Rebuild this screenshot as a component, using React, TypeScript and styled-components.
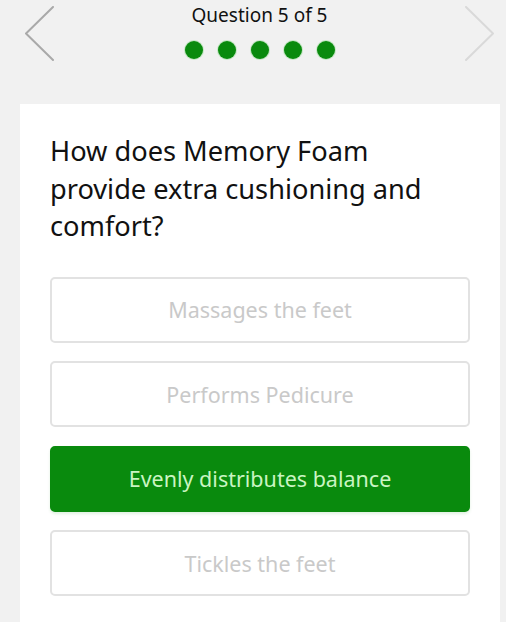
import React from "react";
import styled, { createGlobalStyle } from "styled-components";

const Global = createGlobalStyle`
  html, body { margin: 0; padding: 0; background: #f1f1f1; }
  body { font-family: "Noto Sans", "Open Sans", sans-serif; -webkit-font-smoothing: antialiased; }
`;

const Page = styled.div`
  width: 506px;
  height: 622px;
  overflow: hidden;
  background: #f1f1f1;
  display: flex;
  flex-direction: column;
`;

const Header = styled.header`
  height: 104px;
  display: grid;
  grid-template-columns: 80px 1fr 80px;
  align-items: start;
`;

const NavButton = styled.button<{ $side: "left" | "right" }>`
  border: 0;
  background: transparent;
  padding: 0;
  margin: 6px 0 0 0;
  height: 56px;
  display: flex;
  justify-content: ${(p) => (p.$side === "left" ? "flex-start" : "flex-end")};
  padding-left: ${(p) => (p.$side === "left" ? "25px" : "0")};
  padding-right: ${(p) => (p.$side === "right" ? "12px" : "0")};
`;

const Center = styled.div`
  display: flex;
  flex-direction: column;
  align-items: center;
  padding-top: 2px;
  padding-left: 13px;
`;

const Title = styled.div`
  font-size: 19px;
  line-height: 26px;
  color: #111;
`;

const Dots = styled.div`
  display: flex;
  gap: 15px;
  margin-top: 13px;
`;

const Dot = styled.span<{ $done: boolean }>`
  width: 18px;
  height: 18px;
  border-radius: 50%;
  background: ${(p) => (p.$done ? "#098a0d" : "#cfcfcf")};
  box-shadow: 0 0 0 1px rgba(60, 200, 60, 0.25);
`;

const Card = styled.main`
  flex: 1;
  margin: 0 6px 0 20px;
  background: #fff;
  padding: 28px 30px 0 30px;
`;

const Question = styled.h1`
  margin: 0 0 32px 0;
  font-weight: 400;
  font-size: 27.2px;
  line-height: 37.5px;
  color: #111;
`;

const Options = styled.div`
  display: flex;
  flex-direction: column;
  gap: 18.5px;
  width: 420px;
`;

const Option = styled.button<{ $selected: boolean }>`
  height: 66px;
  border-radius: 5px;
  font-family: inherit;
  font-size: 21.5px;
  cursor: pointer;
  border: 2px solid ${(p) => (p.$selected ? "#098a0d" : "#e2e2e2")};
  background: ${(p) => (p.$selected ? "#098a0d" : "#fff")};
  color: ${(p) => (p.$selected ? "#caf5c2" : "#c9c9c9")};
  box-shadow: ${(p) => (p.$selected ? "0 2px 3px rgba(9,138,13,0.12)" : "none")};
`;

const Chevron = ({ dir, color }: { dir: "left" | "right"; color: string }) => (
  <svg width="30" height="56" viewBox="0 0 30 56" fill="none">
    <path
      d={dir === "left" ? "M28 1 L1 27.5 L28 54" : "M2 1 L29 27.5 L2 54"}
      stroke={color}
      strokeWidth="2"
      strokeLinecap="round"
      strokeLinejoin="round"
    />
  </svg>
);

const options = [
  "Massages the feet",
  "Performs Pedicure",
  "Evenly distributes balance",
  "Tickles the feet",
];

export default function App() {
  return (
    <Page>
      <Global />
      <Header>
        <NavButton $side="left" aria-label="Previous">
          <Chevron dir="left" color="#a9a9a9" />
        </NavButton>
        <Center>
          <Title>Question 5 of 5</Title>
          <Dots>
            {[0, 1, 2, 3, 4].map((i) => (
              <Dot key={i} $done />
            ))}
          </Dots>
        </Center>
        <NavButton $side="right" aria-label="Next">
          <Chevron dir="right" color="#d9d9d9" />
        </NavButton>
      </Header>
      <Card>
        <Question>
          How does Memory Foam
          <br />
          provide extra cushioning and
          <br />
          comfort?
        </Question>
        <Options>
          {options.map((o, i) => (
            <Option key={o} $selected={i === 2}>
              {o}
            </Option>
          ))}
        </Options>
      </Card>
    </Page>
  );
}
